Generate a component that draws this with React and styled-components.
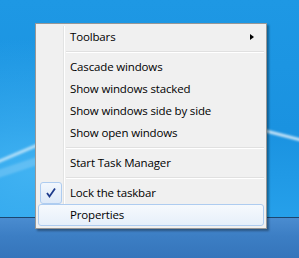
import React from 'react'
import styled, { createGlobalStyle } from 'styled-components'

const GlobalStyle = createGlobalStyle`
  html, body { margin: 0; padding: 0; }
  body {
    width: 299px;
    height: 258px;
    overflow: hidden;
    font-family: "Open Sans", "Noto Sans", sans-serif;
  }
`;

const Screen = styled.div`
  position: relative;
  width: 299px;
  height: 258px;
  display: flex;
  flex-direction: column;
  overflow: hidden;
`;

const Desktop = styled.div`
  flex: 1;
  display: flex;
  background:
    radial-gradient(ellipse at 10% 80%, #40b2f2 0%, transparent 55%),
    linear-gradient(180deg, #1e98e4 0%, #1a92e0 60%, #26a0ea 100%);
`;

const Taskbar = styled.div`
  height: 40px;
  border-top: 1px solid #1b4670;
  background: linear-gradient(180deg, #4a8cd0 0%, #3c7ec4 45%, #3575bb 100%);
`;

const Menu = styled.div`
  position: absolute;
  left: 35px;
  top: 23px;
  width: 226px;
  padding: 2px;
  background: #f0f0f0;
  border: 1px solid #979797;
  box-shadow: 2px 2px 2px rgba(0, 0, 0, 0.35);
  display: flex;
  flex-direction: column;
  &::before {
    content: '';
    position: absolute;
    top: 2px;
    bottom: 2px;
    left: 27px;
    width: 1px;
    background: #e2e3e3;
    border-right: 1px solid #ffffff;
  }
`;

const Item = styled.div`
  position: relative;
  height: 22px;
  display: flex;
  align-items: center;
  padding-left: 31px;
  padding-bottom: 1px;
  font-size: 11.5px;
  letter-spacing: -0.15px;
  color: #000;
  border: 1px solid ${({ $hot }) => ($hot ? '#aeccf0' : 'transparent')};
  border-radius: 3px;
  box-sizing: border-box;
  background: ${({ $hot }) =>
    $hot ? 'linear-gradient(180deg, #f6f9fd 0%, #e6effa 100%)' : 'transparent'};
  z-index: 1;
`;

const Separator = styled.div`
  height: 8px;
  display: flex;
  align-items: center;
  padding-left: 28px;
  &::after {
    content: '';
    flex: 1;
    height: 1px;
    background: #e0e0e0;
    border-bottom: 1px solid #ffffff;
  }
`;

const CheckBox = styled.div`
  position: absolute;
  left: 1px;
  top: -1px;
  width: 20px;
  height: 20px;
  border: 1px solid #aeccf0;
  border-radius: 3px;
  background: linear-gradient(180deg, #f2f7fd 0%, #dde9f8 100%);
  display: flex;
  align-items: center;
  justify-content: center;
`;

const Arrow = styled.span`
  position: absolute;
  right: 9px;
  top: 7px;
  width: 0;
  height: 0;
  border-top: 3.5px solid transparent;
  border-bottom: 3.5px solid transparent;
  border-left: 4px solid #000;
`;

const Check = () => (
  <svg width="12" height="12" viewBox="0 0 12 12">
    <path d="M2 6 L4.5 9.5 L10 1.5" fill="none" stroke="#1e3b8c" strokeWidth="1.8" />
  </svg>
)

const Wallpaper = () => (
  <svg width="299" height="217" viewBox="0 0 299 217">
    <defs>
      <filter id="soft" x="-20%" y="-50%" width="140%" height="200%">
        <feGaussianBlur stdDeviation="1.2" />
      </filter>
    </defs>
    <path d="M-5 163 L40 144" stroke="rgba(255,255,255,0.6)" strokeWidth="3" filter="url(#soft)" />
    <path d="M-5 175 L40 160" stroke="rgba(255,255,255,0.18)" strokeWidth="8" filter="url(#soft)" />
    <path d="M262 130 L305 141" stroke="rgba(255,255,255,0.75)" strokeWidth="3" filter="url(#soft)" />
  </svg>
)

export default function App() {
  return (
    <>
      <GlobalStyle />
      <Screen>
        <Desktop><Wallpaper /></Desktop>
        <Taskbar />
        <Menu>
          <Item>Toolbars<Arrow /></Item>
          <Separator />
          <Item>Cascade windows</Item>
          <Item>Show windows stacked</Item>
          <Item>Show windows side by side</Item>
          <Item>Show open windows</Item>
          <Separator />
          <Item>Start Task Manager</Item>
          <Separator />
          <Item><CheckBox><Check /></CheckBox>Lock the taskbar</Item>
          <Item $hot>Properties</Item>
        </Menu>
      </Screen>
    </>
  )
}
